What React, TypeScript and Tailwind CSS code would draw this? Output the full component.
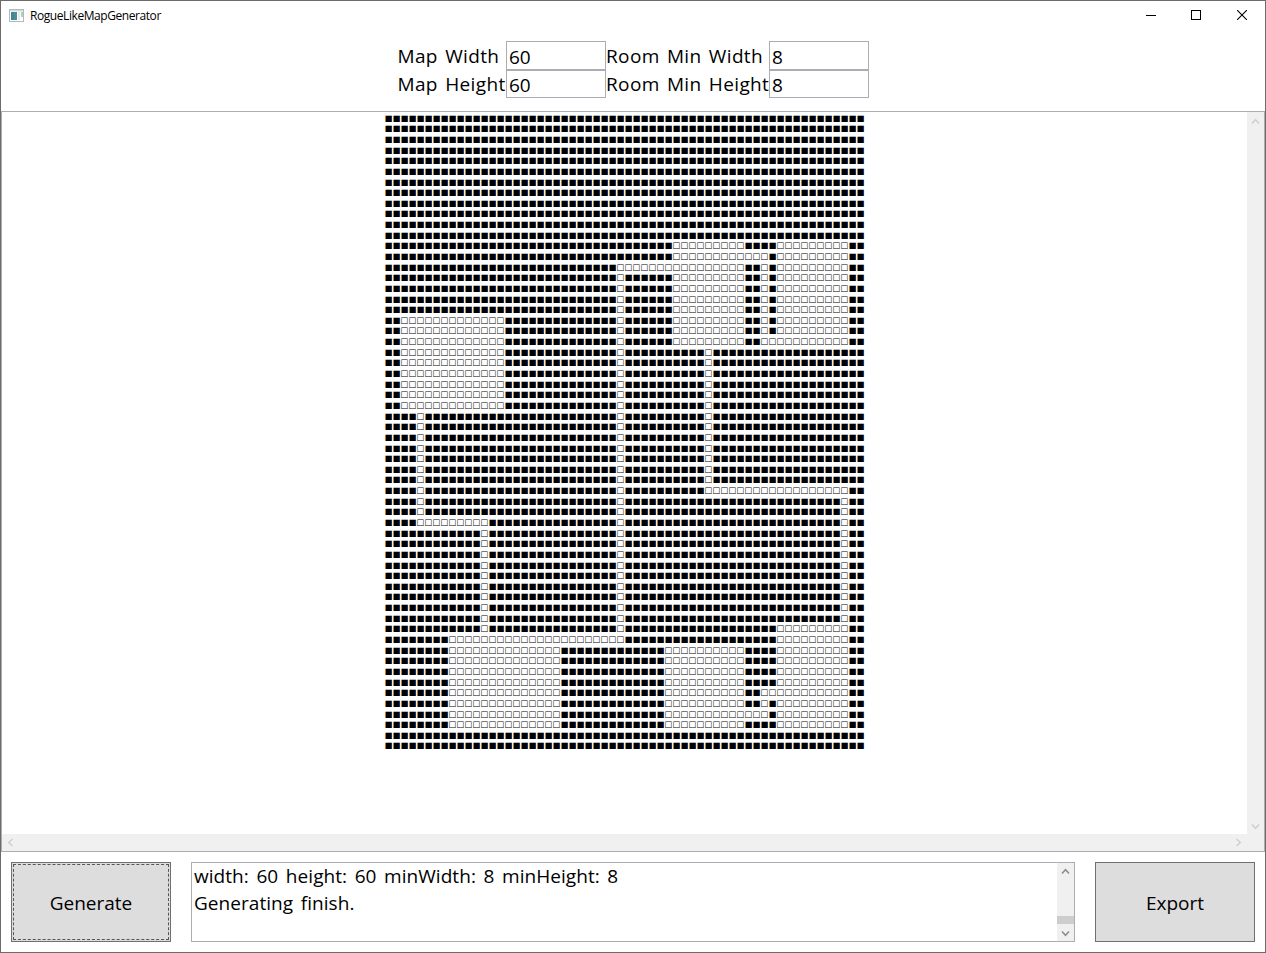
import React from "react";

type Range = [number, number];

// Open (walkable) column ranges, keyed by row spans of the generated dungeon.
const OPEN: { rows: Range; cols: Range[] }[] = [
  { rows: [12, 12], cols: [[36, 44], [49, 57]] },
  { rows: [13, 13], cols: [[36, 47], [49, 57]] },
  { rows: [14, 14], cols: [[29, 44], [47, 47], [49, 57]] },
  { rows: [15, 20], cols: [[36, 44], [47, 47], [49, 57]] },
  { rows: [21, 21], cols: [[36, 44], [47, 57]] },
  { rows: [15, 49], cols: [[29, 29]] },
  { rows: [22, 34], cols: [[40, 40]] },
  { rows: [35, 35], cols: [[40, 57]] },
  { rows: [36, 47], cols: [[57, 57]] },
  { rows: [19, 27], cols: [[2, 14]] },
  { rows: [28, 37], cols: [[4, 4]] },
  { rows: [38, 38], cols: [[4, 12]] },
  { rows: [39, 48], cols: [[12, 12]] },
  { rows: [48, 57], cols: [[49, 57]] },
  { rows: [49, 49], cols: [[8, 29]] },
  { rows: [50, 57], cols: [[8, 21], [35, 44]] },
  { rows: [54, 54], cols: [[47, 48]] },
  { rows: [55, 55], cols: [[47, 47]] },
  { rows: [56, 56], cols: [[45, 47]] },
];

const within = (n: number, [a, b]: Range) => n >= a && n <= b;

const MAP = Array.from({ length: 60 }, (_, r) =>
  Array.from({ length: 60 }, (_, c) =>
    OPEN.some((o) => within(r, o.rows) && o.cols.some((k) => within(c, k))) ? "□" : "■",
  ).join(""),
);

// Rows have a fractional pitch; each one is snapped to a whole pixel.
const rowTop = (n: number) => Math.round(0.696 + n * 10.64);
const rowHeight = (n: number) => rowTop(n + 1) - rowTop(n);

function Chevron({ dir, className }: { dir: "up" | "down" | "left" | "right"; className: string }) {
  const d = {
    up: "M1 6.5 4.5 2.7 8 6.5",
    down: "M1 2.5 4.5 6.3 8 2.5",
    left: "M6.5 1 2.7 4.5 6.5 8",
    right: "M2.5 1 6.3 4.5 2.5 8",
  }[dir];
  return (
    <svg width="9" height="9" viewBox="0 0 9 9" className={className}>
      <path d={d} fill="none" stroke="currentColor" strokeWidth="1.5" />
    </svg>
  );
}

function TitleBar() {
  return (
    <header className="mb-[2px] flex h-[28px] shrink-0 items-center">
      <svg width="15" height="13" viewBox="0 0 15 13" className="ml-2 shrink-0">
        <rect x="0.5" y="0.5" width="14" height="12" fill="#fff" stroke="#b4b8bf" />
        <rect x="1" y="1" width="13" height="1.5" fill="#d5d9df" />
        <rect x="2" y="3" width="6" height="8" fill="#4a8f8c" />
        <rect x="2" y="3" width="3" height="8" fill="#47799f" opacity=".6" />
        <rect x="9" y="3" width="2" height="8" fill="#e6eaf0" />
        <rect x="12" y="3" width="2" height="5" fill="#a9d3b4" />
      </svg>
      <span className="mt-px ml-[6px] font-['Open_Sans',sans-serif] text-[12px] leading-[16px] tracking-[-0.43px] whitespace-nowrap">
        RogueLikeMapGenerator
      </span>
      <div className="ml-auto flex">
        <button className="flex h-[28px] w-[46px] items-center justify-center" aria-label="Minimize">
          <svg width="10" height="10" shapeRendering="crispEdges"><path d="M0 5h10v1H0z" /></svg>
        </button>
        <button className="flex h-[28px] w-[44px] items-center justify-center" aria-label="Maximize">
          <svg width="10" height="10" shapeRendering="crispEdges"><path d="M.5.5h9v9h-9z" fill="none" stroke="#000" /></svg>
        </button>
        <button className="flex h-[28px] w-[47px] items-center justify-center" aria-label="Close">
          <svg width="10" height="10"><path d="M0 0 10 10M10 0 0 10" stroke="#000" strokeWidth="1.1" /></svg>
        </button>
      </div>
    </header>
  );
}

const labelCls = "leading-[28px] whitespace-nowrap";
const inputCls = "w-[100px] border border-[#abadb3] bg-white pl-[2px] leading-[26px] tracking-[-0.2px]";

function Settings() {
  return (
    <section className="mt-[10px] ml-[396px] grid h-[70px] shrink-0 grid-cols-[109px_100px_163px_100px] grid-rows-[29px_28px] tracking-[0.36px] [word-spacing:2px]">
      <span className="pt-px pl-[0.5px] leading-[28px] whitespace-nowrap">Map Width</span>
      <div className={`${inputCls} pt-[2px]`}>60</div>
      <span className="pt-px leading-[28px] whitespace-nowrap">Room Min Width</span>
      <div className={`${inputCls} pt-[2px]`}>8</div>
      <span className="pl-[0.5px] leading-[28px] whitespace-nowrap">Map Height</span>
      <div className={`${inputCls} pt-[1px]`}>60</div>
      <span className={labelCls}>Room Min Height</span>
      <div className={`${inputCls} pt-[1px]`}>8</div>
    </section>
  );
}

function MapView() {
  return (
    <main className="flex h-[741px] shrink-0 flex-col border border-[#abadb3]">
      <div className="flex h-[722px]">
        <div className="min-w-0 flex-1 pt-px pl-[382.78px] font-['DejaVu_Sans',sans-serif] text-[8.25px] leading-[10px] tracking-[0.2052px]">
          {MAP.map((row, i) => (
            <div key={i} className="whitespace-nowrap" style={{ height: rowHeight(i) }}>{row}</div>
          ))}
        </div>
        <div className="flex w-[17px] flex-col items-center justify-between bg-[#f0f0f0] pt-[5px] pb-[3px] text-[#cfcfcf]">
          <Chevron dir="up" className="" />
          <Chevron dir="down" className="" />
        </div>
      </div>
      <div className="flex h-[17px] items-center justify-between bg-[#f0f0f0] pr-[21px] pl-[4px] text-[#cfcfcf]">
        <Chevron dir="left" className="" />
        <Chevron dir="right" className="" />
      </div>
    </main>
  );
}

function Footer() {
  return (
    <footer className="mt-[10px] flex h-[80px] shrink-0 gap-5 px-[10px]">
      <button className="w-[160px] border border-[#707070] bg-[#ddd] p-px">
        <span className="flex h-full items-center justify-center border border-dashed border-[#555] pt-[3px]">Generate</span>
      </button>
      <div className="flex flex-1 border border-[#abadb3]">
        <div className="flex-1 pl-[2px] leading-[27px] tracking-[0.05px] [word-spacing:2.6px]">
          <p>width: 60 height: 60 minWidth: 8 minHeight: 8</p>
          <p>Generating finish.</p>
        </div>
        <div className="flex w-[17px] flex-col items-center bg-[#f0f0f0] text-[#8c8c8c]">
          <Chevron dir="up" className="mt-[4px]" />
          <div className="mt-[40px] h-[8px] w-full bg-[#cdcdcd]" />
          <Chevron dir="down" className="mt-[5px]" />
        </div>
      </div>
      <button className="w-[160px] border border-[#707070] bg-[#ddd] pt-[3px]">Export</button>
    </footer>
  );
}

export default function App() {
  return (
    <div className="flex h-[953px] w-[1266px] flex-col overflow-hidden border border-[#6b6b6b] bg-white font-['Open_Sans',sans-serif] text-[19px] text-black">
      <TitleBar />
      <Settings />
      <MapView />
      <Footer />
    </div>
  );
}
